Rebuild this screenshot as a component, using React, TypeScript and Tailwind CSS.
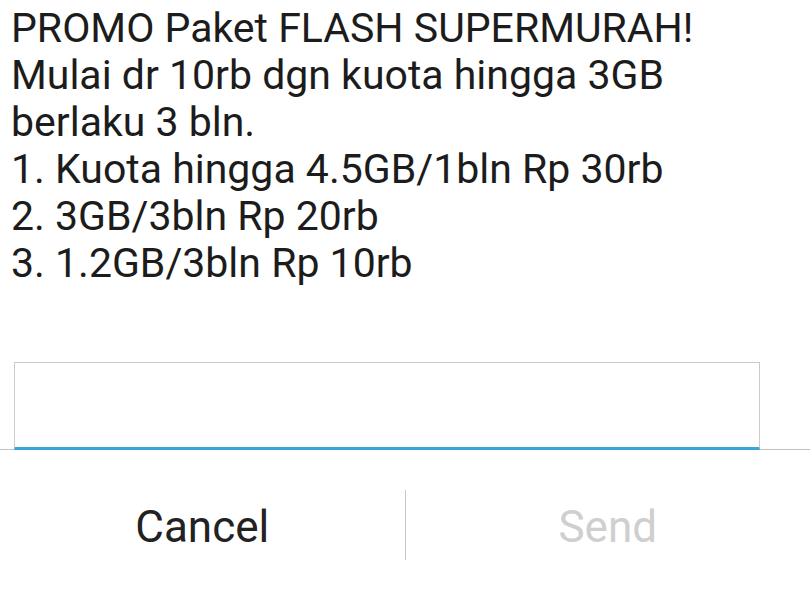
import React from "react";

// Android holo style prompt dialog: promo message, empty input, Cancel / Send
export default function App() {
  const lines = [
    "PROMO Paket FLASH SUPERMURAH!",
    "Mulai dr 10rb dgn kuota hingga 3GB",
    "berlaku 3 bln.",
    "1. Kuota hingga 4.5GB/1bln Rp 30rb",
    "2. 3GB/3bln Rp 20rb",
    "3. 1.2GB/3bln Rp 10rb",
  ];

  return (
    <div className="w-[810px] h-[592px] bg-white overflow-hidden" style={{ fontFamily: "Roboto, 'Noto Sans', sans-serif" }}>
      <div className="pl-[11px] pt-[5px] text-[41px] leading-[47px] text-[#1c1c1c]">
        {lines.map((line) => (
          <div key={line}>{line}</div>
        ))}
      </div>

      <div className="mt-[75px] pl-[14px] pr-[50px] border-b border-[#c2c2c2]">
        <div className="relative h-[88px] -mb-px bg-white border-x border-t border-[#cbcbcb] border-b-[3px] border-b-[#37a6da]" />
      </div>

      <div className="flex h-[142px]">
        <div className="flex-1 pt-[52px] text-center text-[44px] leading-[50px] text-[#222]">Cancel</div>
        <div className="w-px h-[70px] mt-[40px] bg-[#c8c8c8]" />
        <div className="flex-1 pt-[52px] text-center text-[44px] leading-[50px] text-[#cfcfcf]">Send</div>
      </div>
    </div>
  );
}
